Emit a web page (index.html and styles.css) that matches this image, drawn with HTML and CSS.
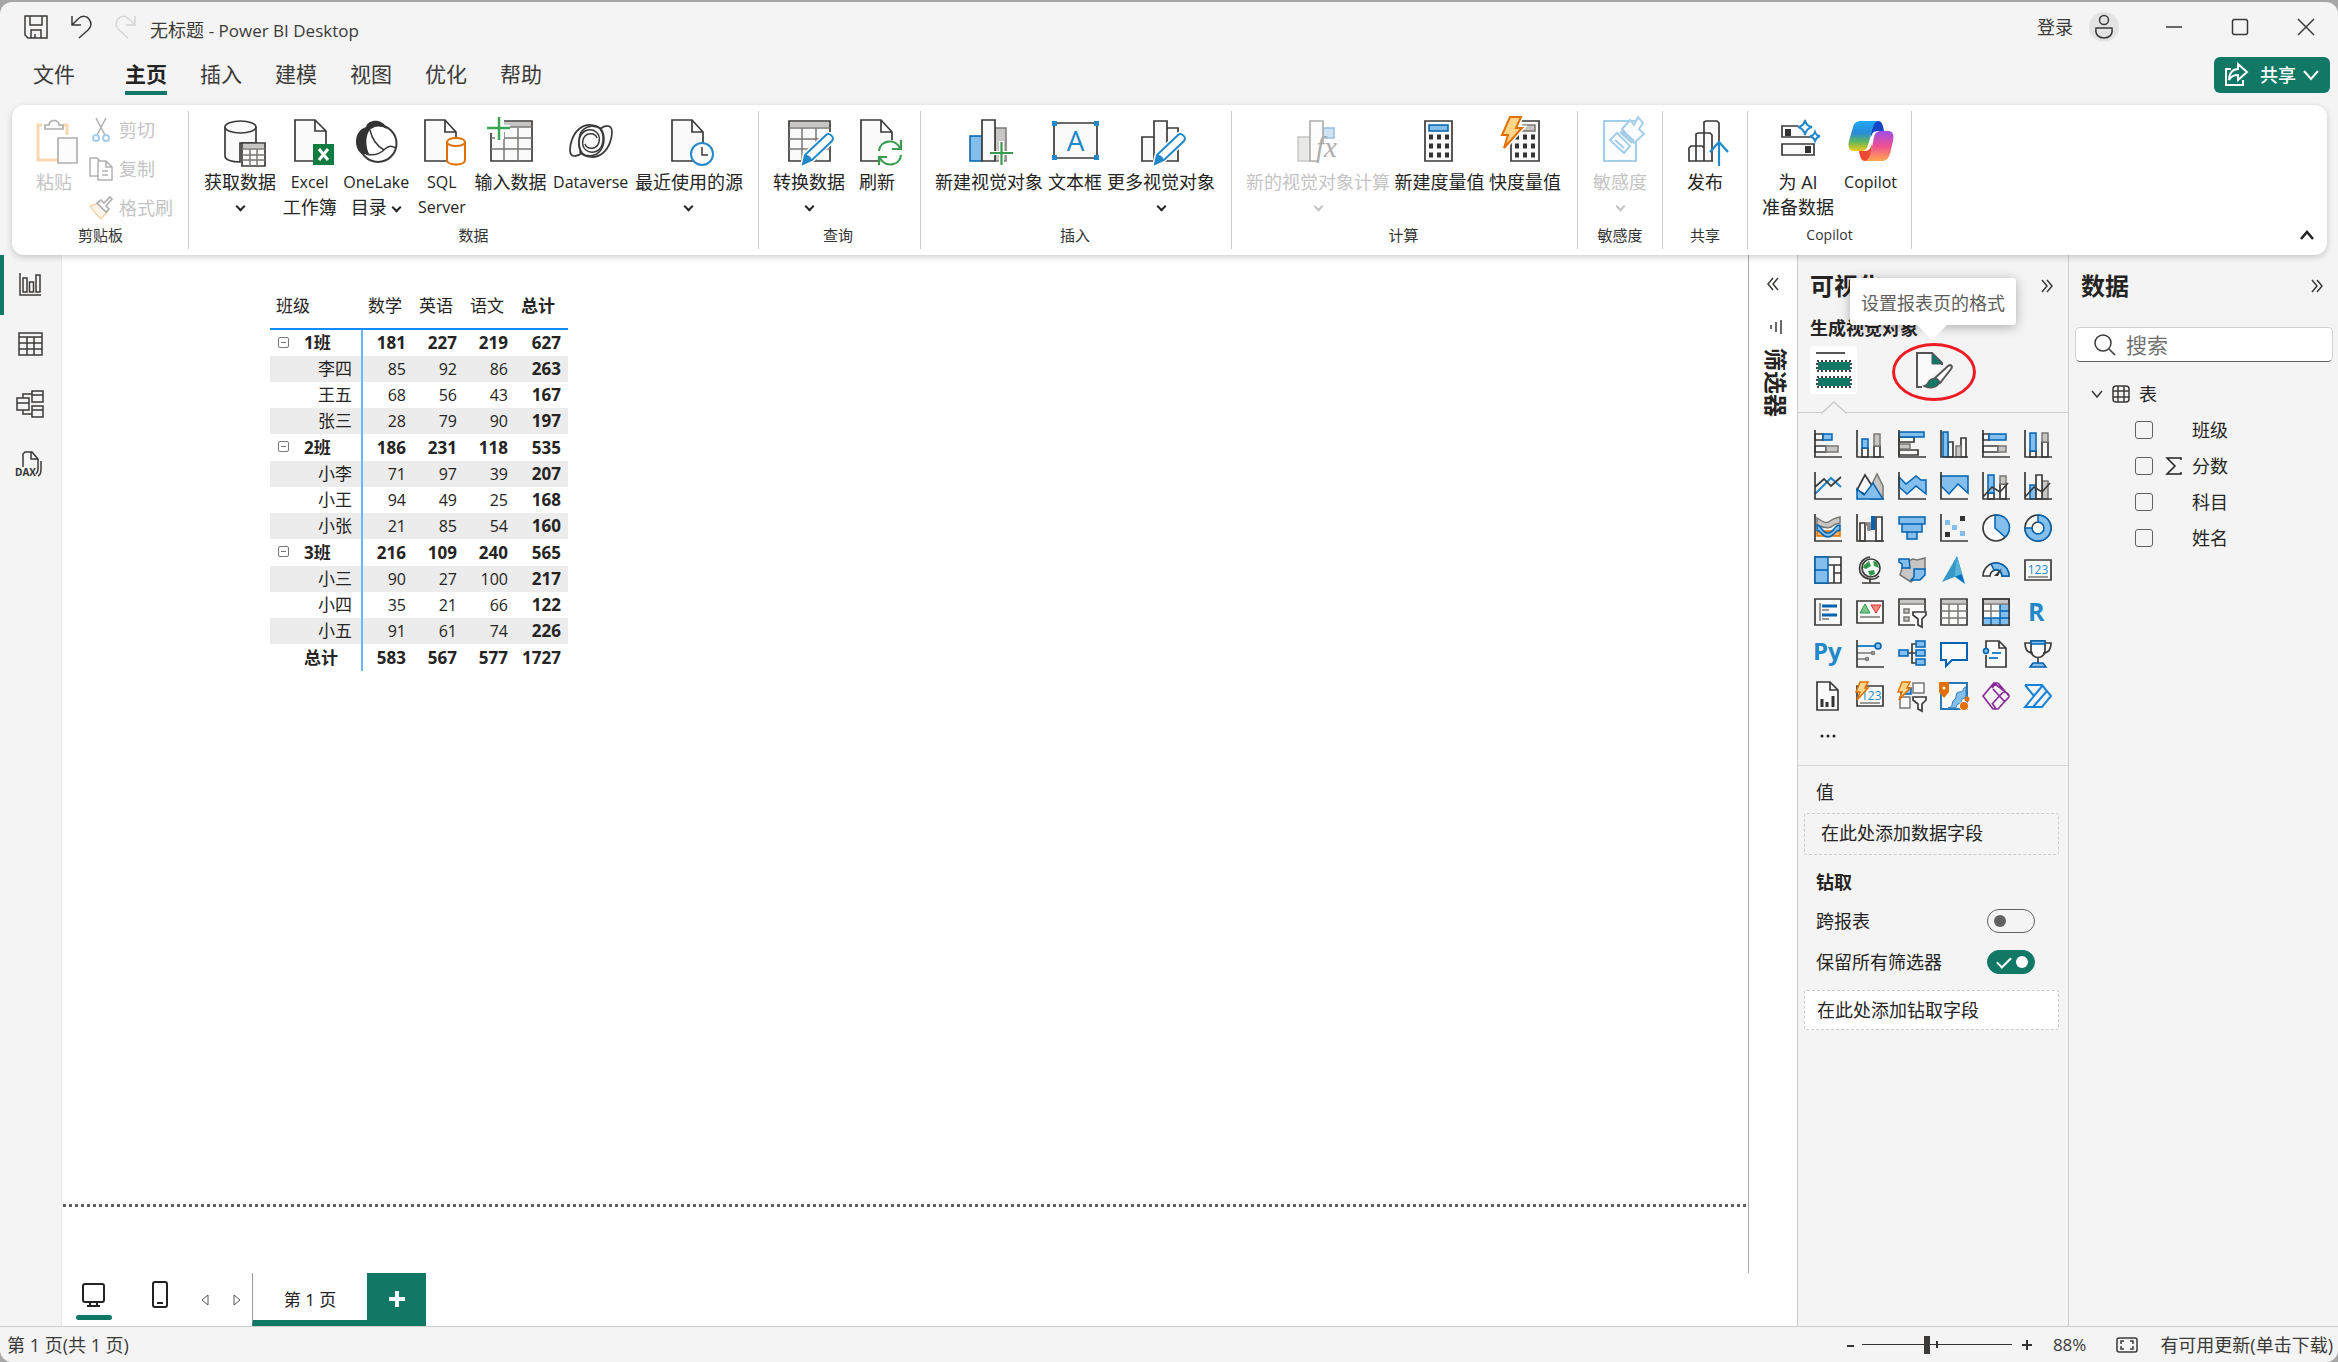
FILE: index.html
```html
<!DOCTYPE html>
<html lang="zh-CN">
<head>
<meta charset="utf-8">
<title>无标题 - Power BI Desktop</title>
<link rel="stylesheet" href="styles.css">
</head>
<body>
<div class="window">
  <header class="titlebar">
    <button class="tool" aria-label="保存"><svg width="24" height="24" viewBox="0 0 24 24"><path class="ln" d="M1 1H23V23H4L1 20ZM6 1V10H18V1M7 23V15H17V23M11 19V23"/></svg></button>
    <button class="tool" aria-label="撤消"><svg width="24" height="24" viewBox="0 0 24 24"><path class="ln" d="M3 1V10H12M3 10L9 4C13 0 18 1 20 4C23 8 22 12 19 15L10 23"/></svg></button>
    <button class="tool off" aria-label="恢复"><svg width="24" height="24" viewBox="0 0 24 24"><path class="ln" d="M21 1V10H12M21 10L15 4C11 0 6 1 4 4C1 8 2 12 5 15L14 23"/></svg></button>
    <h1 class="doc-title">无标题 <span class="latin-l">- Power BI Desktop</span></h1>
    <button class="sign-in">登录</button>
    <button class="avatar" aria-label="帐户"><svg width="30" height="30" viewBox="0 0 30 30"><circle cx="15" cy="8" r="4.500" class="ln"/><path class="ln" d="M7 16H23C24 23 20 26 15 26C10 26 6 23 7 16Z"/></svg></button>
    <button class="win-btn" aria-label="最小化"><svg width="18" height="18" viewBox="0 0 18 18"><path class="ln" d="M1 9H17"/></svg></button>
    <button class="win-btn" aria-label="最大化"><svg width="18" height="18" viewBox="0 0 18 18"><rect class="ln" x="1.500" y="1.500" width="15" height="15" rx="2"/></svg></button>
    <button class="win-btn" aria-label="关闭"><svg width="18" height="18" viewBox="0 0 18 18"><path class="ln" d="M1 1L17 17M17 1L1 17"/></svg></button>
  </header>

  <nav class="tabs">
    <a class="tab file" href="#">文件</a>
    <a class="tab on" href="#">主页</a>
    <a class="tab" href="#">插入</a>
    <a class="tab" href="#">建模</a>
    <a class="tab" href="#">视图</a>
    <a class="tab" href="#">优化</a>
    <a class="tab" href="#">帮助</a>
    <button class="share"><svg width="24" height="24" viewBox="0 0 24 24"><path class="ln" d="M7 6H2V22H19V17M14 1L23 9L14 17V12C10 12 7 13 5 17C5 10 9 6 14 6Z"/></svg><span>共享</span><svg width="16" height="16" viewBox="0 0 16 16"><path class="ln" d="M1 4L8 12L15 4"/></svg></button>
  </nav>

  <section class="ribbon">
    <div class="group clip">
      <div class="items">
        <button class="big off"><svg viewBox="0 0 48 48"><path d="M12 8H8V43H27M33 8H37V18" fill="none" stroke="#f0a040" stroke-width="3"/><path class="k" d="M15 12V8H19C19 2 29 2 29 8H33V12ZM28 21H47V46H28Z"/></svg><span>粘贴</span></button>
        <div class="small-list">
          <button class="small off"><svg width="24" height="24" viewBox="0 0 24 24"><path class="ln" d="M7 0L16 17M17 0L8 17"/><g fill="none" stroke="#2188c9" stroke-width="2"><circle cx="7" cy="20" r="3"/><circle cx="17" cy="20" r="3"/></g></svg><span>剪切</span></button>
          <button class="small off"><svg width="24" height="24" viewBox="0 0 24 24"><path class="ln" d="M9 19H1V1H8L11 4M9 4H17L23 10V23H9ZM17 4V10H23M13 14H19M13 18H19"/></svg><span>复制</span></button>
          <button class="small off"><svg width="24" height="24" viewBox="0 0 24 24"><path d="M1 10L10 7L19 15L12 23C8 19 4 15 1 10Z" fill="#fbe3c4" stroke="#e8963d" stroke-width="1.500"/><path class="k" d="M8 7L12 4L15 7L21 1L23 3L17 10L20 13L17 16Z"/></svg><span>格式刷</span></button>
        </div>
      </div>
      <div class="caption">剪贴板</div>
    </div>

    <div class="group data">
      <div class="items">
        <button class="big"><svg viewBox="0 0 48 48"><path class="k" d="M9 10V39C9 43 16 45 24 45V26H40V10"/><ellipse class="k" cx="24.500" cy="10" rx="15.500" ry="6"/><path class="k" d="M26 26H49V49H26Z"/><path d="M27 27H48V31H27Z" fill="#c8c6c4"/><path class="gl" d="M26 32H49M26 38H49M26 43H49M34 32V49M41 32V49"/></svg><span>获取数据</span><i class="chev"></i></button>
        <button class="big"><svg viewBox="0 0 48 48"><path class="k" d="M9 3H29L40 14V44H9ZM29 3V14H40"/><rect x="27" y="27" width="21" height="21" fill="#107c41"/><path d="M33 32L42 43M42 32L33 43" stroke="#fff" stroke-width="3"/></svg><span class="latin">Excel</span><span>工作簿</span></button>
        <button class="big"><svg viewBox="0 0 48 48"><circle cx="26" cy="26.500" r="18.500" fill="#fff" stroke="#3b3a39" stroke-width="2"/><path d="M14 37C8 39 4 31 4 25C4 17 8 12 14 10C16 2 31 1 35 12C28 8 21 9 17 14C13 21 14 30 17 37Z" fill="#333"/><path class="ln" d="M18 13C20 22 25 29 32 33M14 37C21 39 28 37 33 32C37 28 40 29 44 31"/></svg><span class="latin">OneLake</span><span>目录<i class="chev"></i></span></button>
        <button class="big"><svg viewBox="0 0 48 48"><path class="k" d="M7 3H27L38 15V44H7ZM27 3V15H38"/><path d="M29 25V43C29 49 47 49 47 43V25" fill="#fff" stroke="#e07000" stroke-width="2"/><ellipse cx="38" cy="25" rx="9" ry="4" fill="#fff" stroke="#e07000" stroke-width="2"/></svg><span class="latin">SQL</span><span class="latin">Server</span></button>
        <button class="big"><svg viewBox="0 0 48 48"><path class="k" d="M5 4H46V44H5Z"/><path d="M18 5H45V10H18Z" fill="#c8c6c4"/><path class="gl" d="M5 21H46M5 32H46M18 11V44M32 11V44M18 10H46"/><path d="M0 0H18V8H24V15H18V22H9V16H0Z" fill="#fff"/><path d="M13 0V23M1 11H24" stroke="#3aa655" stroke-width="2.500"/></svg><span>输入数据</span></button>
        <button class="big"><svg viewBox="0 0 48 48"><path class="k" d="M35 13C30 7 19 6 12 12C5 18 3 28 3 33C3 41 10 40 15 36L35 13Z"/><path class="k" d="M13 35C18 41 29 42 36 36C43 30 45 20 45 15C45 7 38 8 33 12Z"/><path class="k" d="M34 12C38 18 38 28 33 34C28 40 19 40 15 36C11 31 11 19 15 14C20 8 29 8 34 12Z" stroke="none"/><path class="ln" d="M15 36C10 30 11 18 18 14C27 10 34 17 32 25C30 33 20 33 18 27M33 12C38 18 37 30 30 34C21 38 14 31 16 23C18 15 28 15 30 21"/></svg><span class="latin">Dataverse</span></button>
        <button class="big"><svg viewBox="0 0 48 48"><path class="k" d="M7 3H27L38 15V44H7ZM27 3V15H38"/><circle cx="37" cy="37" r="11" fill="#fff" stroke="#2188c9" stroke-width="2"/><path class="ln" d="M37 30V38H43"/></svg><span>最近使用的源</span><i class="chev"></i></button>
      </div>
      <div class="caption">数据</div>
    </div>

    <div class="group query">
      <div class="items">
        <button class="big"><svg viewBox="0 0 48 48"><path class="k" d="M4 4H45V44H4Z"/><path d="M5 5H44V10H5Z" fill="#c8c6c4"/><path class="gl" d="M4 11H45M4 22H45M4 32H45M17 11V44M31 11V44"/><path d="M18 47L20 38L41 18C44 15 50 20 47 24L27 43Z" fill="#fff" stroke="#fff" stroke-width="5"/><path d="M18 47L20 38L41 18C44 15 50 20 47 24L27 43Z" fill="#fff" stroke="#2188c9" stroke-width="2"/><path d="M18 47L20 38C24 38 26 40 27 43Z" fill="#2188c9"/></svg><span>转换数据</span><i class="chev"></i></button>
        <button class="big"><svg viewBox="0 0 48 48"><path class="k" d="M8 3H28L39 15V44H8ZM28 3V15H39"/><circle cx="37" cy="36" r="13" fill="#fff"/><path d="M26 34C27 23 42 21 47 31M48 23V32H39M48 38C47 49 32 51 27 41M26 48V40H34" fill="none" stroke="#3a9a50" stroke-width="2.200"/></svg><span>刷新</span></button>
      </div>
      <div class="caption">查询</div>
    </div>

    <div class="group insert">
      <div class="items">
        <button class="big"><svg viewBox="0 0 48 48"><path class="b" d="M5 19H17V44H5Z"/><path class="g" d="M30 11H41V44H30Z"/><path class="k" d="M17 3H30V44H17Z"/><path d="M25 34H34V24H39V34H48V38H39V48H34V38H25Z" fill="#fff"/><path d="M36.500 25V48M25 36H48" stroke="#3a9a50" stroke-width="2.200"/></svg><span>新建视觉对象</span></button>
        <button class="big"><svg viewBox="0 0 48 48"><path class="k" d="M3 6H46V41H3Z"/><path d="M1 4H6V9H1ZM43 4H48V9H43ZM1 38H6V43H1ZM43 38H48V43H43Z" fill="#2188c9"/><text x="24.500" y="34" text-anchor="middle" font-size="28" fill="#2188c9">A</text></svg><span>文本框</span></button>
        <button class="big"><svg viewBox="0 0 48 48"><path class="k" d="M5 20H17V44H5ZM30 11H41V44H30ZM17 4H30V44H17Z"/><path d="M18 47L20 38L41 18C44 15 50 20 47 24L27 43Z" fill="#fff" stroke="#fff" stroke-width="5"/><path d="M18 47L20 38L41 18C44 15 50 20 47 24L27 43Z" fill="#fff" stroke="#2188c9" stroke-width="2"/><path d="M18 47L20 38C24 38 26 40 27 43Z" fill="#2188c9"/></svg><span>更多视觉对象</span><i class="chev"></i></button>
      </div>
      <div class="caption">插入</div>
    </div>

    <div class="group calc">
      <div class="items">
        <button class="big off"><svg viewBox="0 0 48 48"><path class="g" d="M4 20H16V44H4Z"/><path class="b" d="M29 11H40V21H29Z"/><path class="k" d="M29 26V4H16V44H23"/><text x="22" y="40" font-size="29" font-style="italic" class="fx" fill="#333">fx</text></svg><span>新的视觉对象计算</span><i class="chev"></i></button>
        <button class="big"><svg viewBox="0 0 48 48"><path class="k" d="M9 4H36V44H9Z"/><path class="b" d="M13 8H32V14H13Z"/><path d="M13 20H33M13 29H33M13 38H33" stroke="#333" stroke-width="5" stroke-dasharray="4 4"/></svg><span>新建度量值</span></button>
        <button class="big"><svg viewBox="0 0 48 48"><path class="k" d="M10 4H38V44H10Z"/><path class="g" d="M22 8H34V14H20Z"/><path d="M14 20H34M14 29H34M14 38H34" stroke="#333" stroke-width="5" stroke-dasharray="4 4"/><path d="M9 0H20L15 11H21L3 31L7 18H1Z" fill="#fcd68a" stroke="#fff" stroke-width="5"/><path d="M9 0H20L15 11H21L3 31L7 18H1Z" fill="#fcd68a" stroke="#e07000" stroke-width="2"/></svg><span>快度量值</span></button>
      </div>
      <div class="caption">计算</div>
    </div>

    <div class="group one">
      <div class="items">
        <button class="big off"><svg viewBox="0 0 48 48"><g fill="#f5fafd" stroke="#2188c9" stroke-width="2"><path d="M8 4H40V44H8Z"/><path d="M14 23L21 16L34 29L28 36ZM19 23L28 31"/><path d="M26 12L34 3L38 8L42 0L47 6L43 12L48 17L38 26Z"/></g><path d="M25 14L37 25" stroke="#2188c9" stroke-width="5"/></svg><span>敏感度</span><i class="chev"></i></button>
      </div>
      <div class="caption">敏感度</div>
    </div>

    <div class="group one">
      <div class="items">
        <button class="big"><svg viewBox="0 0 48 48"><path class="k" d="M23 44V5L25 4H36L38 6V44ZM15 44V17L17 16H29L31 18V44ZM8 44V31L10 29H21L23 31V44Z"/><path d="M32 24H45V48H32Z" fill="#fff"/><path d="M38 49V26M29 35L38 25L47 35" fill="none" stroke="#2188c9" stroke-width="2.200"/></svg><span>发布</span></button>
      </div>
      <div class="caption">共享</div>
    </div>

    <div class="group ai">
      <div class="items">
        <button class="big"><svg viewBox="0 0 48 48"><path class="k" d="M24 9H8V20H40M8 27H40V38H8Z"/><path d="M11 12H17V19H11ZM31 29H37V36H31Z" fill="#333"/><g fill="#fff" stroke="#2188c9" stroke-width="2"><path d="M31 3C32 8 34 9 38 10C34 11 32 13 31 18C30 13 28 11 24 10C28 9 30 8 31 3Z"/><path d="M41 15C42 18 43 19 46 19C43 20 42 21 41 24C40 21 39 20 36 19C39 19 40 18 41 15Z"/></g></svg><span>为 AI</span><span>准备数据</span></button>
        <button class="big"><svg viewBox="0 0 48 48"><defs><linearGradient id="ca" x1="0" y1="0" x2="0" y2="1"><stop offset="0" stop-color="#20a8f5"/><stop offset=".4" stop-color="#2a8ad8"/><stop offset=".7" stop-color="#62b85a"/><stop offset="1" stop-color="#f5c71a"/></linearGradient><linearGradient id="cb" x1="0" y1="0" x2="0" y2="1"><stop offset="0" stop-color="#a04fe8"/><stop offset=".5" stop-color="#ee4f92"/><stop offset="1" stop-color="#ffa850"/></linearGradient></defs><path d="M24 4H31C35 4 36 8 37 14H31C25 14 25 18 24 20Z" fill="#1546c4"/><path d="M24 44H18C14 44 13 40 12 34H18C23 34 24 30 25 26Z" fill="#ec4a34"/><path d="M14 4H31C27 5 26 10 24 18L21 28C20 32 18 34 14 34H7C1 34 1 28 2 24L6 10C7 6 10 4 14 4Z" fill="url(#ca)"/><path d="M35 44H18C22 43 23 38 25 30L27 20C28 16 30 14 34 14H41C47 14 47 20 46 24L43 37C41 42 39 44 35 44Z" fill="url(#cb)"/></svg><span class="latin">Copilot</span></button>
      </div>
      <div class="caption"><span class="latin-s">Copilot</span></div>
    </div>
    <button class="collapse" aria-label="折叠功能区"><svg width="14" height="14" viewBox="0 0 14 14"><path d="M1 11L7 4L13 11" fill="none" stroke="#222" stroke-width="2.500"/></svg></button>
  </section>

  <div class="work">
    <nav class="rail">
      <a class="on" href="#" aria-label="报表视图"><svg width="28" height="28" viewBox="0 0 28 28"><path class="ln" d="M4 3V25H25M7 8H11V22H7ZM13.500 12H17.500V22H13.500ZM20 5H24V22H20Z"/></svg></a>
      <a href="#" aria-label="表格视图"><svg width="28" height="28" viewBox="0 0 28 28"><path class="ln" d="M3 3H26V25H3ZM3 7H26M3 13H26M3 19H26M11 7V25M18 7V25"/></svg></a>
      <a href="#" aria-label="模型视图"><svg width="28" height="28" viewBox="0 0 28 28"><path class="ln" d="M1 8H13V20H1ZM1 13H13M16 1H27V12H16ZM16 5H27M16 16H27V27H16ZM16 20H27M7 8V4H16M7 20V24H16"/></svg></a>
      <a href="#" aria-label="DAX 查询视图"><svg width="28" height="28" viewBox="0 0 28 28"><path class="ln" d="M7 17V4L9 2H16L22 9V19C22 21 21 23 20 24M15 2V9H22M25 11V20C25 23 24 25 22 26"/><text x="-1" y="26" font-size="10" font-weight="700" fill="#333">DAX</text></svg></a>
    </nav>

    <div class="center">
      <div class="report">
        <main class="canvas">
          <table class="matrix">
            <colgroup><col class="c1"><col class="c2"><col class="c2"><col class="c2"><col class="c3"></colgroup>
            <thead><tr><th>班级</th><th>数学</th><th>英语</th><th>语文</th><th class="sum">总计</th></tr></thead>
            <tbody>
              <tr class="top"><th><button aria-label="折叠"></button>1班</th><td>181</td><td>227</td><td>219</td><td>627</td></tr>
              <tr class="alt"><th>李四</th><td>85</td><td>92</td><td>86</td><td>263</td></tr>
              <tr><th>王五</th><td>68</td><td>56</td><td>43</td><td>167</td></tr>
              <tr class="alt"><th>张三</th><td>28</td><td>79</td><td>90</td><td>197</td></tr>
              <tr class="top"><th><button aria-label="折叠"></button>2班</th><td>186</td><td>231</td><td>118</td><td>535</td></tr>
              <tr class="alt"><th>小李</th><td>71</td><td>97</td><td>39</td><td>207</td></tr>
              <tr><th>小王</th><td>94</td><td>49</td><td>25</td><td>168</td></tr>
              <tr class="alt"><th>小张</th><td>21</td><td>85</td><td>54</td><td>160</td></tr>
              <tr class="top"><th><button aria-label="折叠"></button>3班</th><td>216</td><td>109</td><td>240</td><td>565</td></tr>
              <tr class="alt"><th>小三</th><td>90</td><td>27</td><td>100</td><td>217</td></tr>
              <tr><th>小四</th><td>35</td><td>21</td><td>66</td><td>122</td></tr>
              <tr class="alt"><th>小五</th><td>91</td><td>61</td><td>74</td><td>226</td></tr>
              <tr class="top total"><th>总计</th><td>583</td><td>567</td><td>577</td><td>1727</td></tr>
            </tbody>
          </table>
          <div class="page-edge"></div>
        </main>
        <aside class="filters">
          <button aria-label="展开筛选器"><svg width="12" height="14" viewBox="0 0 12 14"><path class="ln" d="M6 1L1 7L6 13M11 1L6 7L11 13"/></svg></button>
          <svg width="14" height="14" viewBox="0 0 14 14"><path class="ln" d="M12 0V14M7 2V12M2 5V9"/></svg>
          <h2>筛选器</h2>
        </aside>
      </div>
      <footer class="pages">
        <button class="device on" aria-label="桌面布局"><svg width="28" height="28" viewBox="0 0 28 28"><rect x="3" y="4" width="21" height="18" rx="2" fill="none" stroke="#222" stroke-width="2"/><path d="M10 22V26M17 22V26M7 26H20" stroke="#222" stroke-width="2"/></svg></button>
        <button class="device" aria-label="移动布局"><svg width="28" height="28" viewBox="0 0 28 28"><rect x="7" y="2" width="14" height="25" rx="2" fill="none" stroke="#222" stroke-width="2"/><path d="M11 23H17" stroke="#222" stroke-width="2"/></svg></button>
        <button class="step" aria-label="上一页"><svg width="8" height="12" viewBox="0 0 8 12"><path d="M7 1V11L1 6Z" fill="none" stroke="#555"/></svg></button>
        <button class="step" aria-label="下一页"><svg width="8" height="12" viewBox="0 0 8 12"><path d="M1 1V11L7 6Z" fill="none" stroke="#555"/></svg></button>
        <button class="page">第 1 页</button>
        <button class="add" aria-label="新建页"><svg width="18" height="18" viewBox="0 0 18 18"><path d="M9 0V16M1 8H17" stroke="#fff" stroke-width="4"/></svg></button>
      </footer>
    </div>

    <aside class="visuals">
      <div class="pane-head"><h2>可视化</h2><button aria-label="折叠窗格"><svg width="12" height="14" viewBox="0 0 12 14"><path class="ln" d="M1 1L6 7L1 13M6 1L11 7L6 13"/></svg></button></div>
      <h3>生成视觉对象</h3>
      <div class="modes">
        <button class="mode on" aria-label="生成视觉对象"><svg width="36" height="36" viewBox="0 0 36 36"><path d="M0 1H29" stroke="#555" stroke-width="2"/><path d="M1 9H35V19H1ZM1 25H35V35H1Z" fill="#117865" stroke="#fff" stroke-width="2"/><path d="M1 9H35V19H1ZM1 25H35V35H1Z" fill="none" stroke="#444" stroke-width="2" stroke-dasharray="2 2"/></svg></button>
        <button class="mode" aria-label="设置报表页的格式"><svg width="36" height="36" viewBox="0 0 36 36"><path d="M6 35H1V1H16L26 11V13" fill="#fafafa" stroke="#555" stroke-width="2"/><path d="M16 1V12H27Z" fill="#117865" stroke="#555"/><path d="M19 26L32 14C35 12 37 14 35 17L24 31Z" fill="#fff" stroke="#555" stroke-width="2"/><path d="M8 34C13 33 11 30 14 28C18 25 24 27 23 31C21 36 13 37 8 34Z" fill="#117865" stroke="#555" stroke-width="1.500"/></svg>
          <span class="tip" role="tooltip">设置报表页的格式</span><i class="ring"></i></button>
      </div>
      <div class="notch"><svg width="26" height="13" viewBox="0 0 26 13"><path d="M0 12L1 12L13 1L25 12L26 12V13H0Z" fill="#f4f4f4"/><path d="M0 12L1 12L13 1L25 12L26 12" fill="none" stroke="#ccc" stroke-width="1.500"/></svg></div>
      <div class="gallery">
        <button aria-label="堆积条形图"><svg viewBox="0 0 28 28"><path class="k" d="M1 4H9V10H1ZM1 16H12V22H1Z"/><path class="b" d="M9 4H18V10H9Z"/><path class="g" d="M12 16H24V22H12Z"/><path class="ax" d="M1 0V27H28"/></svg></button>
        <button aria-label="堆积柱形图"><svg viewBox="0 0 28 28"><path class="k" d="M6 18H12V27H6ZM18 16H24V27H18Z"/><path class="b" d="M6 9H12V18H6Z"/><path class="g" d="M18 4H24V16H18Z"/><path class="ax" d="M1 0V27H28"/></svg></button>
        <button aria-label="簇状条形图"><svg viewBox="0 0 28 28"><path class="k" d="M1 7H16V12H1ZM1 20H20V25H1Z"/><path class="b" d="M1 2H26V7H1Z"/><path class="g" d="M1 14H12V19H1Z"/><path class="ax" d="M1 0V27H28"/></svg></button>
        <button aria-label="簇状柱形图"><svg viewBox="0 0 28 28"><path class="k" d="M8 12H13V27H8ZM21 8H26V27H21Z"/><path class="b" d="M3 2H8V27H3Z"/><path class="g" d="M16 16H21V27H16Z"/><path class="ax" d="M1 0V27H28"/></svg></button>
        <button aria-label="百分比堆积条形图"><svg viewBox="0 0 28 28"><path class="k" d="M1 4H7V10H1ZM1 16H16V22H1Z"/><path class="b" d="M7 4H24V10H7Z"/><path class="g" d="M16 16H24V22H16Z"/><path class="ax" d="M1 0V27H28"/></svg></button>
        <button aria-label="百分比堆积柱形图"><svg viewBox="0 0 28 28"><path class="k" d="M6 21H12V27H6ZM18 12H24V27H18Z"/><path class="b" d="M6 3H12V21H6Z"/><path class="g" d="M18 3H24V12H18Z"/><path class="ax" d="M1 0V27H28"/></svg></button>

        <button aria-label="折线图"><svg viewBox="0 0 28 28"><path d="M1 22L17 6L27 15" fill="none" stroke="#2188c9" stroke-width="2"/><path class="ax" d="M1 15L10 7L17 14L27 5M1 0V27H28"/></svg></button>
        <button aria-label="分区图"><svg viewBox="0 0 28 28"><path class="g" d="M15 14L21 2L27 14V27H15Z"/><path class="k" d="M1 18L9 3L18 17L12 24Z"/><path class="b" d="M1 27V17L8 23L17 11L27 27Z"/></svg></button>
        <button aria-label="堆积面积图"><svg viewBox="0 0 28 28"><path class="b" d="M1 5L8 12L18 4L23 8H28V22L18 14L9 22L1 15Z"/><path class="ax" d="M1 0V27H28"/></svg></button>
        <button aria-label="百分比堆积面积图"><svg viewBox="0 0 28 28"><path class="b" d="M1 4H28V21L18 12L9 22L1 14Z"/><path class="ax" d="M1 0V27H28"/></svg></button>
        <button aria-label="折线和堆积柱形图"><svg viewBox="0 0 28 28"><path class="k" d="M6 21H12V27H6ZM18 12H24V27H18Z"/><path class="b" d="M6 3H12V21H6Z"/><path class="g" d="M18 4H24V12H18Z"/><path class="ax" d="M1 25L10 15L18 20L26 11M1 0V27H28"/></svg></button>
        <button aria-label="折线和簇状柱形图"><svg viewBox="0 0 28 28"><path class="b" d="M6 13H12V27H6Z"/><path class="g" d="M18 9H24V27H18Z"/><path class="k" d="M12 3H18V27H12Z"/><path class="ax" d="M1 25L10 15L18 20L26 11M1 0V27H28"/></svg></button>

        <button aria-label="丝带图"><svg viewBox="0 0 28 28"><path d="M3 17H26V22H3Z" fill="#f6b26b" stroke="#e07000" stroke-width="1.500"/><path class="g" d="M3 4C9 8 12 10 16 7C20 4 22 4 26 3V9C22 10 20 10 17 13C12 15 8 13 3 11Z"/><path class="b" d="M3 11C7 11 9 20 14 19C20 19 20 11 26 11V16C21 16 20 23 14 23C8 23 7 17 3 16Z"/><path class="ax" d="M1 0V27H28"/></svg></button>
        <button aria-label="瀑布图"><svg viewBox="0 0 28 28"><path class="k" d="M4 9H9V27H4ZM20 3H26V27H20Z"/><path class="g" d="M10 9H14V16H12V11H10Z"/><path d="M15 2H19V16H15Z" fill="#0063b1"/><path class="ax" d="M1 0V27H28"/></svg></button>
        <button aria-label="漏斗图"><svg viewBox="0 0 28 28"><path class="b" d="M1 3H27V10H1ZM4 10H24V18H4ZM9 18H19V25H9Z"/></svg></button>
        <button aria-label="散点图"><svg viewBox="0 0 28 28"><path d="M5 6H10V11H5ZM12 11H17V16H12ZM20 17H25V22H20Z" fill="#83beec"/><path d="M20 2H25V7H20ZM5 18H10V23H5Z" fill="#333"/><path class="ax" d="M1 0V27H28"/></svg></button>
        <button aria-label="饼图"><svg viewBox="0 0 28 28"><circle class="k" cx="14" cy="14" r="13"/><path class="b" d="M13 1C29 1 31 17 23 23L13 14Z"/></svg></button>
        <button aria-label="圆环图"><svg viewBox="0 0 28 28"><circle class="k" cx="14" cy="14" r="13"/><circle class="ln" cx="14" cy="14" r="6"/><path class="b" d="M14 1A13 13 0 1 1 1 14H8A6 6 0 1 0 14 8Z"/></svg></button>

        <button aria-label="树状图"><svg viewBox="0 0 28 28"><path class="k" d="M1 1H27V27H1ZM14 9H27M20 9V27M20 17H27"/><path class="b" d="M1 1H14V27H1ZM1 14H14"/></svg></button>
        <button aria-label="地图"><svg viewBox="0 0 28 28"><circle class="k" cx="15" cy="12" r="9"/><path d="M8 9L13 5L15 10L10 13L7 12ZM17 5L21 6L23 12L18 10ZM12 15L18 14L19 18L14 20Z" fill="#2e9a48"/><path class="ax" d="M14 1C0 3 0 22 14 23C18 24 21 22 23 20M14 23V27M6 27H24"/></svg></button>
        <button aria-label="着色地图"><svg viewBox="0 0 28 28"><path class="g" d="M10 5L15 3L19 4L27 2V13L22 17L13 26L2 19L4 12Z"/><path class="b" d="M1 3H11L12 12H4V8L1 6ZM16 13H27V19L22 24L13 24L16 21Z"/></svg></button>
        <button aria-label="Azure 地图"><svg viewBox="0 0 28 28"><path d="M17 0L2 26L17 20Z" fill="#3999c6"/><path d="M17 0L25 28L14 20Z" fill="#0072c6"/><path d="M17 0L22 18L14 21Z" fill="#59b4d9"/></svg></button>
        <button aria-label="仪表"><svg viewBox="0 0 28 28"><path class="k" d="M1 20A13 13 0 0 1 27 20H20A6 6 0 0 0 8 20Z"/><path class="b" d="M9 8A13 13 0 0 1 27 20H20A6 6 0 0 0 12 14Z"/><path d="M12 20L20 12L16 20Z" fill="#333"/></svg></button>
        <button aria-label="卡片图"><svg viewBox="0 0 28 28"><path class="k" d="M1 4H27V24H1Z"/><text x="14" y="18" text-anchor="middle" font-size="12" fill="#2188c9">123</text><path class="gl" d="M4 21H24"/></svg></button>

        <button aria-label="多行卡"><svg viewBox="0 0 28 28"><path class="k" d="M1 1H27V27H1Z"/><path d="M8 8H23M8 17H23" stroke="#0063b1" stroke-width="3"/><path class="gl" d="M6 5V23M8 12H15M8 21H15"/></svg></button>
        <button aria-label="KPI"><svg viewBox="0 0 28 28"><path class="k" d="M1 3H27V25H1Z"/><path d="M4 15L9 6L14 15Z" fill="#7cc48b" stroke="#2e9a48"/><path d="M15 7H25L20 15Z" fill="#f28b82" stroke="#d92c2c"/><path class="gl" d="M4 19H24"/></svg></button>
        <button aria-label="切片器"><svg viewBox="0 0 28 28"><path class="k" d="M17 27H1V1H27V13"/><path d="M2 2H26V5H2Z" fill="#c8c6c4"/><path class="gl" d="M1 6H27"/><path class="g" d="M6 11H11V15H6ZM6 19H11V23H6Z"/><path class="k" d="M15 14H28V17L24 21V29L20 27V21L15 17Z"/></svg></button>
        <button aria-label="表"><svg viewBox="0 0 28 28"><path class="k" d="M1 1H27V27H1Z"/><path d="M2 2H26V5H2Z" fill="#c8c6c4"/><path class="gl" d="M1 6H27M1 13H27M1 20H27M9 6V27M18 6V27"/></svg></button>
        <button aria-label="矩阵"><svg viewBox="0 0 28 28"><path class="k" d="M1 1H27V27H1Z"/><path d="M2 2H26V5H2Z" fill="#c8c6c4"/><path d="M18 6H27V27H1V20H18Z" fill="#83beec"/><path d="M1 20H27M18 6V27M9 20V27M18 13H27" stroke="#0063b1" stroke-width="1.500"/><path class="gl" d="M1 6H27M1 13H18M9 6V20"/><path class="ln" d="M1 1H27V27H1Z"/></svg></button>
        <button aria-label="R 脚本"><svg viewBox="0 0 28 28"><text x="4" y="23" font-size="25" font-weight="700" fill="#2188c9">R</text></svg></button>

        <button aria-label="Python"><svg viewBox="0 0 28 28"><text x="-1" y="20" font-size="24" font-weight="700" fill="#2188c9">Py</text></svg></button>
        <button aria-label="关键影响者"><svg viewBox="0 0 28 28"><path d="M1 6H20" stroke="#2188c9" stroke-width="2"/><circle class="b" cx="22" cy="6" r="3"/><path class="gl" d="M1 13H15M1 19H9"/><circle class="g" cx="17" cy="13" r="1.500"/><circle class="g" cx="11" cy="19" r="1.500"/><path class="ax" d="M1 0V27H28"/></svg></button>
        <button aria-label="分解树"><svg viewBox="0 0 28 28"><path class="ax" d="M10 13H18M18 4H14V23H18"/><path class="b" d="M1 10H10V16H1ZM18 1H27V7H18ZM18 10H27V16H18ZM18 19H27V25H18Z"/></svg></button>
        <button aria-label="问答"><svg viewBox="0 0 28 28"><path d="M1 3H27V20H12L6 26V20H1Z" fill="#fafafa" stroke="#0063b1" stroke-width="2"/></svg></button>
        <button aria-label="叙述"><svg viewBox="0 0 28 28"><path class="k" d="M4 8V1H17L24 8V27H4V15M17 1V8H24"/><circle class="b" cx="4" cy="11" r="2.500"/><path d="M10 13H19M7 18H16" stroke="#2188c9" stroke-width="2"/></svg></button>
        <button aria-label="目标"><svg viewBox="0 0 28 28"><path class="k" d="M7 3H1C1 9 3 13 9 13M21 3H27C27 9 25 13 19 13M7 1H21V10C21 20 7 20 7 10ZM14 17V24"/><path class="b" d="M7 1H21V4H7ZM6 27L9 23H19L22 27Z"/></svg></button>

        <button aria-label="分页报表"><svg viewBox="0 0 28 28"><path class="k" d="M3 0H16L24 8V28H3ZM16 0V8H24"/><path d="M8 17V25M13 20V25M19 14V25" stroke="#333" stroke-width="3"/></svg></button>
        <button aria-label="卡片图(新)"><svg viewBox="0 0 28 28"><path class="k" d="M1 4H27V24H1Z"/><text x="5" y="18" font-size="12" fill="#2188c9">123</text><path class="gl" d="M4 21H24"/><path class="bolt" d="M4 0H12L9 6H12L1 18L4 10H0Z"/></svg></button>
        <button aria-label="切片器(新)"><svg viewBox="0 0 28 28"><path class="gw" d="M15 1H26V11H15ZM2 15H12V26H2Z"/><path class="b" d="M3 6H13V12H3Z"/><path class="bolt" d="M4 0H12L9 6H12L1 18L4 10H0Z"/><path class="k" d="M15 15H28V18L24 22V29L20 27V22L15 18Z"/></svg></button>
        <button aria-label="ArcGIS"><svg viewBox="0 0 28 28"><path d="M1 1H27V27H1Z" fill="#fafafa" stroke="#2b78b5" stroke-width="2"/><path d="M8 26C14 25 11 20 14 18C18 16 14 10 20 10C25 9 22 6 26 5V16C20 15 23 22 18 22C15 24 18 26 14 26Z" fill="#83beec" stroke="#2b78b5"/><path d="M-1 0H9V10L4 16L-1 10Z" fill="#e07000"/><circle cx="4" cy="6" r="1.500" fill="#fff"/><circle cx="24" cy="24" r="5" fill="#f4f4f4"/><circle cx="24" cy="24" r="4" fill="#e07000"/><circle cx="27" cy="17" r="2.500" fill="#e07000"/></svg></button>
        <button aria-label="Power Apps"><svg viewBox="0 0 28 28"><g fill="none" stroke="#8a2a9a" stroke-width="1.700"><path d="M1 14L12 1L26 12C28 14 27 15 26 16L16 27H11L1 14ZM16 1L27 14M12 1H16M11 7L23 20M23 8L11 21M14 1L10 6M14 27L10 21"/></g></svg></button>
        <button aria-label="Power Automate"><svg viewBox="0 0 28 28"><path d="M1 3H18L27 14L18 25H1L19 3M1 3L10 14M9 25L23 9" fill="none" stroke="#1683d8" stroke-width="2"/></svg></button>
        <button aria-label="获取更多视觉对象"><svg viewBox="0 0 28 28"><g fill="#222"><circle cx="8" cy="12" r="1.500"/><circle cx="14" cy="12" r="1.500"/><circle cx="20" cy="12" r="1.500"/></g></svg></button>
      </div>
      <div class="wells">
        <h4 class="plain">值</h4>
        <div class="well">在此处添加数据字段</div>
        <h4>钻取</h4>
        <label class="toggle">跨报表<input type="checkbox" role="switch"></label>
        <label class="toggle">保留所有筛选器<input type="checkbox" role="switch" checked></label>
        <div class="well solid">在此处添加钻取字段</div>
      </div>
    </aside>

    <aside class="fields">
      <div class="pane-head"><h2>数据</h2><button aria-label="折叠窗格"><svg width="12" height="14" viewBox="0 0 12 14"><path class="ln" d="M1 1L6 7L1 13M6 1L11 7L6 13"/></svg></button></div>
      <label class="search"><svg width="22" height="22" viewBox="0 0 22 22"><circle class="ln" cx="9" cy="9" r="8"/><path class="ln" d="M15 15L21 21"/></svg><input type="search" placeholder="搜索" aria-label="搜索"></label>
      <div class="tree">
        <button class="node"><svg width="12" height="12" viewBox="0 0 12 12"><path class="ln" d="M1 3L6 9L11 3"/></svg><svg width="18" height="18" viewBox="0 0 18 18"><rect class="ln" x="1" y="1" width="16" height="16" rx="3"/><path class="ln" d="M6 1V17M12 1V17M1 6H17M1 12H17"/></svg>表</button>
        <label class="field"><input type="checkbox"><i></i>班级</label>
        <label class="field"><input type="checkbox"><i><svg width="16" height="18" viewBox="0 0 16 18"><path d="M15 3V1H1L9 9L1 17H15V15" fill="none" stroke="#222" stroke-width="1.500"/></svg></i>分数</label>
        <label class="field"><input type="checkbox"><i></i>科目</label>
        <label class="field"><input type="checkbox"><i></i>姓名</label>
      </div>
    </aside>
  </div>

  <footer class="status">
    <span>第 1 页(共 1 页)</span>
    <div class="zoom">
      <button aria-label="缩小"><svg width="12" height="12" viewBox="0 0 12 12"><path d="M4 7H11" stroke="#333" stroke-width="2"/></svg></button>
      <input type="range" min="10" max="190" value="88" aria-label="缩放">
      <button aria-label="放大"><svg width="12" height="12" viewBox="0 0 12 12"><path d="M1 6H11M6 1V11" stroke="#333" stroke-width="2"/></svg></button>
      <span class="pct">88%</span>
      <button class="fit" aria-label="调整到页面大小"><svg width="22" height="16" viewBox="0 0 22 16"><rect class="ln" x="1" y="1" width="20" height="14" rx="2"/><path class="ln" d="M5 7V4H8M14 4H17V7M17 9V12H14M8 12H5V9"/></svg></button>
      <a href="#">有可用更新(单击下载)</a>
    </div>
  </footer>
</div>
</body>
</html>
```
FILE: styles.css
```css
* { box-sizing: border-box; }
body {
  margin: 0;
  background: #a6a6a6;
  color: #252423;
  font: 18px/26px "Open Sans", "Noto Sans CJK SC", sans-serif;
}
button {
  margin: 0; padding: 0; border: 0; background: none;
  color: inherit; font: inherit;
}
a { color: inherit; text-decoration: none; }
h1, h2, h3, h4 { margin: 0; font-size: 18px; }
svg { display: block; flex: none; overflow: visible; }
i { font-style: normal; }
.latin { font-size: 16px; }
.latin-l { font-size: 17px; }
.latin-s { font-size: 14px; }

/* icon strokes and fills */
.ln { fill: none; stroke: #3b3a39; stroke-width: 1.500; }
.ax { fill: none; stroke: #3b3a39; stroke-width: 1.700; }
.k { fill: #fafafa; stroke: #3b3a39; stroke-width: 1.700; }
.b { fill: #83beec; stroke: #0063b1; stroke-width: 1.500; }
.g { fill: #c8c6c4; stroke: #797774; stroke-width: 1.500; }
.gl { fill: none; stroke: #797774; stroke-width: 1.500; }
.gw { fill: #fafafa; stroke: #797774; stroke-width: 1.500; }
.bolt { fill: #fcd68a; stroke: #e07000; stroke-width: 1.500; }

.window {
  display: flex; flex-direction: column;
  min-height: calc(100vh - 2px);
  margin-top: 2px;
  border-radius: 12px;
  background: #f4f4f4;
  overflow: hidden;
}

.titlebar { display: flex; align-items: center; height: 50px; padding: 0 23px 0 24px; }
.tool { margin-right: 21px; }
.tool.off { opacity: .4; margin-right: 12px; }
.doc-title { flex: 1; margin-top: 6px; font-weight: 400; color: #3b3a39; }
.sign-in { color: #3b3a39; }
.avatar { margin: 0 46px 0 16px; border-radius: 50%; background: #e3e3e3; }
.win-btn { margin-left: 48px; }
.avatar + .win-btn { margin-left: 0; }

.tabs { display: flex; align-items: flex-start; height: 53px; padding: 5px 8px 0 33px; color: #3b3a39; font-size: 21px; }
.tab { margin-right: 33px; line-height: 34px; border-bottom: 4px solid transparent; }
.tab.file { margin-right: 50px; }
.tab.on { border-color: #117865; color: #222; font-weight: 700; }
.share {
  display: flex; align-items: center; height: 36px; margin-left: auto; padding: 0 11px 0 10px;
  border-radius: 6px; background: #117865; color: #fff; font-size: 18px; font-weight: 500;
}
.share span { margin: 0 7px 0 12px; }
.share .ln { stroke: #fff; stroke-width: 2; }

.ribbon {
  position: relative; z-index: 2;
  display: flex; height: 150px; margin: 0 11px 0 12px;
  border-radius: 12px; background: #fff;
  box-shadow: 0 2px 6px rgba(0, 0, 0, .2);
}
.group { display: flex; flex: none; flex-direction: column; margin: 6px 0; padding: 6px 15px 0; border-right: 1px solid #ccc; }
.items { display: flex; flex: 1; justify-content: space-between; }
.clip { width: 177px; padding: 6px 15px 0 16px; }
.data { width: 570px; }
.query { width: 162px; padding: 6px 17px 0 14px; }
.insert { width: 311px; padding: 6px 16px 0 14px; }
.calc { width: 346px; padding: 6px 16px 0 14px; }
.one { width: 85px; padding: 6px 0 0; }
.one .items { justify-content: center; }
.ai { width: 164px; padding: 6px 14px 0; }
.big { display: flex; flex-direction: column; align-items: center; justify-content: flex-start; min-width: 52px; line-height: 25px; white-space: nowrap; }
.big > svg { width: 48px; height: 48px; margin-bottom: 5px; }
.big svg text { font-family: "Open Sans", sans-serif; }
.big svg .fx { font-family: "Liberation Serif", serif; }
.off { color: #c4c4c4; }
.off svg { opacity: .4; }
.small-list { display: flex; flex-direction: column; gap: 13px; }
.small { display: flex; align-items: center; gap: 6px; }
.caption { line-height: 20px; margin-bottom: 4px; color: #333; font-size: 15px; text-align: center; }
.chev { display: inline-block; width: 7px; height: 7px; margin: 8px 4px; border: solid currentColor; border-width: 0 2px 2px 0; transform: rotate(45deg); }
span > .chev { margin: 0 2px 3px 6px; }
.collapse { align-self: flex-end; margin: 0 13px 13px auto; }

.work { display: flex; flex: 1; }
.rail { display: flex; flex-direction: column; width: 62px; border-right: 1px solid #eaeaea; }
.rail a { display: flex; align-items: center; height: 60px; padding: 0 0 2px 16px; }
.rail .on { padding-left: 12px; border-left: 4px solid #117865; }
.center { display: flex; flex: 1; flex-direction: column; background: #fff; }
.report { display: flex; flex: 1; }
.canvas { display: flex; flex: 1; flex-direction: column; padding-top: 25px; border-right: 1px solid #aaa; }

.matrix { width: 298px; margin-left: 208px; border-collapse: collapse; table-layout: fixed; font-size: 17px; }
.c1 { width: 92px; }
.c2 { width: 51px; }
.c3 { width: 53px; }
.matrix th, .matrix td { padding: 0; line-height: 26px; }
.matrix thead th { height: 49px; padding: 13px 6px 9px; border-bottom: 2px solid #118dff; font-weight: 400; text-align: left; }
.matrix thead .sum { font-weight: 700; }
.matrix tbody th { padding-right: 9px; border-right: 2px solid #67b7ff; font-weight: 400; text-align: right; }
.matrix td { padding-right: 7px; font-size: 16px; text-align: right; }
.matrix td:last-child, .matrix .top td { font-size: 17px; font-weight: 700; }
.matrix .top th { height: 27px; padding: 0 0 0 8px; font-weight: 700; text-align: left; }
.matrix .total th { padding-left: 34px; }
.matrix button { display: inline-block; width: 11px; height: 11px; margin: 0 15px 4px 0; border: 1px solid #777; border-radius: 2px; background: linear-gradient(#777, #777) center / 5px 1px no-repeat; vertical-align: middle; }
.alt { background: #ececec; }
.page-edge { height: 3px; margin: auto 1px 66px 1px; background: repeating-linear-gradient(90deg, #5f5f5f 0 3px, transparent 3px 6px); }

.filters { display: flex; flex-direction: column; align-items: center; width: 48px; padding: 22px 0 0 6px; }
.filters button { margin: 0 7px 29px 0; }
.filters h2 { margin-top: 14px; font-size: 23px; line-height: 26px; writing-mode: vertical-rl; text-orientation: sideways; }

.pages { display: flex; height: 53px; padding-left: 14px; }
.device { display: flex; flex-direction: column; align-items: center; width: 36px; margin-right: 30px; padding-top: 7px; }
.device.on::after { content: ""; width: 36px; height: 5px; margin-top: 7px; border-radius: 3px; background: #117865; }
.step { width: 8px; margin: 1px 24px 0 0; display: flex; align-items: center; }
.device + .step { margin-left: -7px; }
.step + .step { margin-right: 11px; }
.page { width: 115px; border-left: 1px solid #999; border-bottom: 6px solid #117865; padding-top: 7px; font-size: 17px; color: #222; }
.add { display: grid; place-items: center; width: 59px; background: #117865; }

.visuals { width: 271px; border-left: 1px solid #ccc; }
.fields { width: 270px; border-left: 1px solid #ccc; }
.pane-head { display: flex; align-items: center; justify-content: space-between; padding: 14px 15px 0 12px; }
.pane-head h2 { font-size: 24px; line-height: 34px; }
.visuals h3 { margin: 12px 0 5px 12px; }
.modes { display: flex; gap: 53px; padding: 0 12px; }
.mode { position: relative; display: grid; place-items: center; width: 47px; height: 48px; border-radius: 3px; }
.mode.on { background: #fff; }
.tip {
  position: absolute; left: -60px; bottom: 69px;
  padding: 12px 11px 9px; border-radius: 3px; background: #fff;
  box-shadow: 0 2px 12px rgba(0, 0, 0, .3);
  color: #605e5c; white-space: nowrap;
}
.tip::after { content: ""; position: absolute; left: 67px; top: 100%; border: 15px solid transparent; border-top-color: #fff; border-bottom: 0; }
.ring { position: absolute; left: -18px; top: -3px; width: 84px; height: 58px; border: 3px solid #ed1c24; border-radius: 50%; }
.notch { height: 19px; padding: 7px 0 0 23px; border-bottom: 1px solid #ccc; }
.gallery { display: grid; grid-template-columns: repeat(6, 28px); gap: 14px; padding: 17px 16px 13px; border-bottom: 1px solid #d8d8d8; }
.gallery button { width: 28px; height: 28px; }
.gallery text { font-family: "Open Sans", sans-serif; }
.wells { padding: 13px 9px 0 6px; }
.wells h4 { margin: 0 12px; }
.wells .plain { font-weight: 400; }
.well { margin: 8px 0 14px; padding: 6px 16px 8px; border: 1px dashed #ccc; border-radius: 3px; }
.well.solid { margin: 15px 0 0; padding: 6px 12px; background: #fff; }
.toggle { display: flex; justify-content: space-between; align-items: center; height: 26px; margin: 13px 24px 0 12px; }
.toggle + .toggle { margin-top: 15px; }
.toggle input { position: relative; width: 48px; height: 24px; margin: 0; appearance: none; border: 1px solid #616161; border-radius: 12px; }
.toggle input::after { content: ""; position: absolute; left: 6px; top: 5px; width: 12px; height: 12px; border-radius: 50%; background: #616161; }
.toggle input:checked { border-color: #117865; background: #117865; }
.toggle input:checked::after { left: 28px; background: #fff; }
.toggle input:checked::before { content: ""; position: absolute; left: 12px; top: 3px; width: 6px; height: 12px; border: solid #fff; border-width: 0 2px 2px 0; transform: rotate(45deg); }

.search { display: flex; align-items: center; gap: 10px; height: 35px; margin: 24px 5px 0 6px; padding: 0 18px; border: 1px solid #d1d1d1; border-bottom-color: #616161; border-radius: 5px; background: #fff; }
.search input { flex: 1; min-width: 0; padding: 0; border: 0; outline: 0; background: none; font: inherit; font-size: 21px; }
.search input::placeholder { color: #707070; }
.tree { padding: 19px 22px; }
.node { display: flex; align-items: center; gap: 9px; }
.field { display: flex; align-items: center; height: 36px; padding-left: 44px; }
.node + .field { margin-top: 5px; }
.field input { width: 18px; height: 18px; margin: 0; appearance: none; border: 1px solid #616161; border-radius: 3px; }
.field i { width: 39px; padding-left: 13px; }

.status { display: flex; align-items: center; justify-content: space-between; height: 36px; padding: 0 5px 0 7px; border-top: 1px solid #ccc; color: #3b3a39; }
.zoom { display: flex; align-items: center; }
.zoom input { width: 150px; height: 18px; margin: 0 9px 0 7px; appearance: none; background: linear-gradient(#333, #333) 50% 50% / 2px 7px no-repeat, linear-gradient(#333, #333) 0 50% / 100% 1px no-repeat; }
.zoom input::-webkit-slider-thumb { appearance: none; width: 6px; height: 18px; background: #3b3a39; }
.pct { margin-left: 20px; font-size: 17px; }
.fit { margin: 0 22px 0 30px; }
```
